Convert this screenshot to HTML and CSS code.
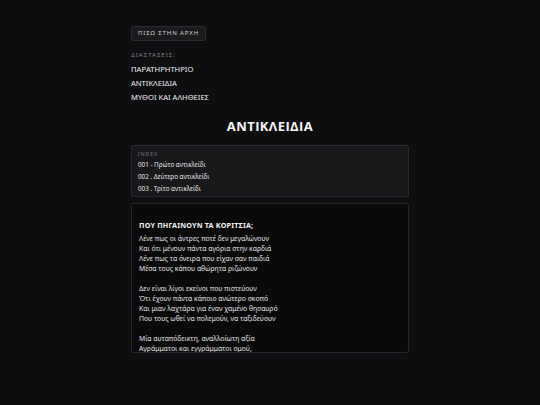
FILE: index.html
```html
<!DOCTYPE html>
<html lang="el">
<head>
<meta charset="utf-8">
<link rel="stylesheet" href="styles.css">
</head>
<body>
<main class="page">
  <a class="back" href="#">ΠΙΣΩ ΣΤΗΝ ΑΡΧΗ</a>
  <div class="dims-label">ΔΙΑΣΤΑΣΕΙΣ:</div>
  <nav class="dims">
    <a href="#">ΠΑΡΑΤΗΡΗΤΗΡΙΟ</a>
    <a href="#">ΑΝΤΙΚΛΕΙΔΙΑ</a>
    <a href="#">ΜΥΘΟΙ ΚΑΙ ΑΛΗΘΕΙΕΣ</a>
  </nav>
  <h1 class="title">ΑΝΤΙΚΛΕΙΔΙΑ</h1>
  <section class="index">
    <div class="index-label">INDEX</div>
    <div class="index-item">001 - Πρώτο αντικλείδι</div>
    <div class="index-item">002 . Δεύτερο αντικλείδι</div>
    <div class="index-item">003 . Τρίτο αντικλείδι</div>
  </section>
  <section class="poem">
    <h2 class="poem-title">ΠΟΥ ΠΗΓΑΙΝΟΥΝ ΤΑ ΚΟΡΙΤΣΙΑ;</h2>
    <p>Λένε πως οι άντρες ποτέ δεν μεγαλώνουν<br>Και ότι μένουν πάντα αγόρια στην καρδιά<br>Λένε πως τα όνειρα που είχαν σαν παιδιά<br>Μέσα τους κάπου αθώρητα ριζώνουν</p>
    <p>Δεν είναι λίγοι εκείνοι που πιστεύουν<br>Ότι έχουν πάντα κάποιο ανώτερο σκοπό<br>Και μιαν λαχτάρα για έναν χαμένο θησαυρό<br>Που τους ωθεί να πολεμούν, να ταξιδεύουν</p>
    <p>Μία αυταπόδεικτη, αναλλοίωτη αξία<br>Αγράμματοι και εγγράμματοι ομού,</p>
  </section>
</main>
</body>
</html>
```
FILE: styles.css
```css
html, body {
  margin: 0;
  padding: 0;
  background: #0e0e10;
}
body {
  font-family: "Noto Sans", "Open Sans", sans-serif;
  color: #e4e4e6;
}
.page {
  width: 278px;
  margin: 0 auto;
  padding-top: 26px;
  display: flex;
  flex-direction: column;
  align-items: stretch;
}
.back {
  align-self: flex-start;
  display: block;
  box-sizing: border-box;
  height: 15px;
  padding: 0 6px;
  line-height: 13px;
  font-size: 6px;
  letter-spacing: 0.9px;
  color: #cfcfd3;
  text-decoration: none;
  background: #1b1b1e;
  border: 1px solid #2c2c30;
  border-radius: 2px;
}
.dims-label {
  margin-top: 10px;
  font-size: 6px;
  line-height: 8px;
  letter-spacing: 1px;
  color: #85858b;
}
.dims {
  display: flex;
  flex-direction: column;
  margin-top: 3px;
}
.dims a {
  font-size: 7.6px;
  line-height: 14px;
  color: #f0f0f2;
  text-decoration: none;
}
.title {
  margin: 13px 0 0;
  text-align: center;
  font-family: "Open Sans", "Noto Sans", sans-serif;
  font-weight: 700;
  font-size: 13px;
  line-height: 18px;
  letter-spacing: 0.4px;
  color: #f6f6f8;
}
.index {
  margin-top: 10px;
  box-sizing: border-box;
  height: 52px;
  padding: 5px 6px 0;
  background: #18181b;
  border: 1px solid #2a2a2e;
  border-radius: 2px;
}
.index-label {
  font-size: 5px;
  line-height: 7px;
  letter-spacing: 1px;
  color: #7c7c82;
  margin-bottom: 1px;
}
.index-item {
  font-size: 6.3px;
  line-height: 12px;
  color: #e6e6e9;
}
.poem {
  margin-top: 6px;
  box-sizing: border-box;
  height: 150px;
  overflow: hidden;
  padding: 16px 7px 0;
  background: #0a0a0b;
  border: 1px solid #26262a;
  border-radius: 2px;
}
.poem-title {
  margin: 0 0 3px;
  font-size: 7.2px;
  font-weight: 700;
  line-height: 11px;
  letter-spacing: 0.2px;
  color: #f2f2f4;
}
.poem p {
  margin: 0 0 10px;
  font-size: 6.8px;
  line-height: 10px;
  color: #e2e2e6;
}
```
